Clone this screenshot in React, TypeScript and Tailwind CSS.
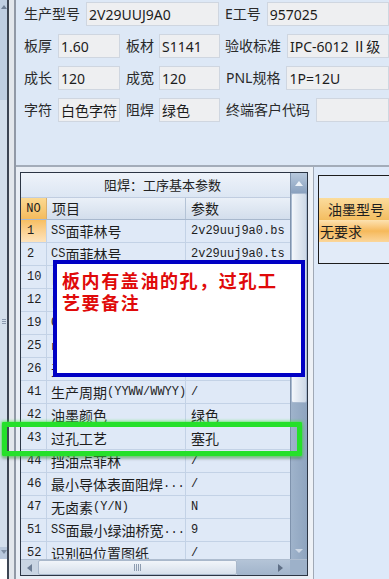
import React from "react";

const FORM_FONT = "font-['Noto_Sans','Noto_Sans_CJK_SC',sans-serif]";

function Mixed({ t }: { t: string }) {
  const parts = t.split(/([\x00-\x7f]+)/).filter((p) => p.length > 0);
  return (
    <>
      {parts.map((p, i) =>
        /^[\x00-\x7f]+$/.test(p) ? (
          <span key={i} className="font-['Liberation_Mono',monospace] text-[12px]">
            {p}
          </span>
        ) : (
          <span key={i}>{p}</span>
        )
      )}
    </>
  );
}

function Field({ w, value, grow }: { w?: string; value: string; grow?: boolean }) {
  return (
    <div
      className={`h-[24px] ${grow ? "flex-1" : w} bg-[#eeeff1] border border-[#cfd6e0] flex items-center pl-[2px] text-[14px] text-[#1c1c1c] whitespace-nowrap overflow-hidden`}
    >
      {value}
    </div>
  );
}

function Label({ t }: { t: string }) {
  return <div className="text-[14px] text-[#2a2a2a] whitespace-nowrap leading-[24px]">{t}</div>;
}

const rows: [string, string, string][] = [
  ["1", "SS面菲林号", "2v29uuj9a0.bs"],
  ["2", "CS面菲林号", "2v29uuj9a0.ts"],
  ["10", "自动曝光", "/"],
  ["12", "自动对位", "/"],
  ["19", "CCD对位", "/"],
  ["25", "中检要求", "/"],
  ["26", "无铅要求", "/"],
  ["41", "生产周期(YYWW/WWYY)", "/"],
  ["42", "油墨颜色", "绿色"],
  ["43", "过孔工艺", "塞孔"],
  ["44", "挡油点菲林", "/"],
  ["46", "最小导体表面阻焊...", "/"],
  ["47", "无卤素(Y/N)", "N"],
  ["51", "SS面最小绿油桥宽...", "9"],
  ["52", "识别码位置图纸", "/"],
];

export default function App() {
  return (
    <div className={`relative w-[389px] h-[579px] overflow-hidden flex bg-[#dde8f6] ${FORM_FONT}`}>
      {/* left strip */}
      <div className="flex h-full shrink-0">
        <div className="w-[7px] h-full flex flex-col">
          <div className="h-[100px] bg-[#bfcee2] flex justify-center pt-[5px]">
            <div className="w-0 h-0 border-l-[3px] border-r-[3px] border-b-[4px] border-l-transparent border-r-transparent border-b-[#6f7f96]" />
          </div>
          <div className="flex-1 bg-[#d4dfec] flex flex-col items-center">
            <div className="mt-[219px] flex flex-col gap-[1px]">
              <div className="w-[4px] h-[1px] bg-[#8c9bb0]" />
              <div className="w-[4px] h-[1px] bg-[#8c9bb0]" />
              <div className="w-[4px] h-[1px] bg-[#8c9bb0]" />
            </div>
          </div>
          <div className="h-[12px] bg-[#b9c8dc] flex justify-center pt-[3px]">
            <div className="w-0 h-0 border-l-[3px] border-r-[3px] border-t-[4px] border-l-transparent border-r-transparent border-t-[#7d8da2]" />
          </div>
          <div className="h-[20px] bg-white" />
        </div>
        <div className="w-[2px] h-full bg-[#3d4553]" />
        <div className="w-[5px] h-full bg-[#e3e7ec]" />
        <div className="w-[2px] h-full bg-[#9199a6]" />
      </div>

      {/* main */}
      <div className="flex-1 flex flex-col min-w-0">
        {/* form */}
        <div className="h-[165px] pl-[8px] pt-[2px] flex flex-col gap-[8px]">
          <div className="flex items-center h-[24px]">
            <Label t="生产型号" />
            <div className="w-[6px]" />
            <Field w="w-[133px]" value="2V29UUJ9A0" />
            <div className="w-[6px]" />
            <Label t="E工号" />
            <div className="w-[6px]" />
            <Field grow value="957025" />
          </div>
          <div className="flex items-center h-[24px]">
            <Label t="板厚" />
            <div className="w-[6px]" />
            <Field w="w-[62px]" value="1.60" />
            <div className="w-[6px]" />
            <Label t="板材" />
            <div className="w-[5px]" />
            <Field w="w-[61px]" value="S1141" />
            <div className="w-[5px]" />
            <Label t="验收标准" />
            <div className="w-[6px]" />
            <Field grow value="IPC-6012 Ⅱ级" />
          </div>
          <div className="flex items-center h-[24px]">
            <Label t="成长" />
            <div className="w-[6px]" />
            <Field w="w-[62px]" value="120" />
            <div className="w-[6px]" />
            <Label t="成宽" />
            <div className="w-[5px]" />
            <Field w="w-[61px]" value="120" />
            <div className="w-[6px]" />
            <Label t="PNL规格" />
            <div className="w-[6px]" />
            <Field grow value="1P=12U" />
          </div>
          <div className="flex items-center h-[24px]">
            <Label t="字符" />
            <div className="w-[6px]" />
            <Field w="w-[62px]" value="白色字符" />
            <div className="w-[6px]" />
            <Label t="阻焊" />
            <div className="w-[5px]" />
            <Field w="w-[61px]" value="绿色" />
            <div className="w-[6px]" />
            <Label t="终端客户代码" />
            <div className="w-[6px]" />
            <Field grow value="" />
          </div>
        </div>

        {/* separator */}
        <div className="h-[2px] bg-[#a3acb9]" />

        {/* bottom */}
        <div className="flex-1 flex min-h-0">
          {/* left table panel */}
          <div className="w-[294px] pl-[4px] pt-[5px] bg-[#e9eef5]">
            <div className="w-[288px] h-[404px] border border-[#2b3544] flex flex-col bg-[#dfe9f7]">
              <div className="flex-1 flex min-h-0">
                <div className="w-[269px] flex flex-col overflow-hidden font-['Noto_Sans_CJK_SC',sans-serif] text-[14px] text-[#1e1e1e]">
                  <div className="h-[25px] shrink-0 flex items-center justify-center pl-[14px] bg-linear-to-b from-[#eef3fa] to-[#dce6f3] border-b border-[#c0cde0] text-[13px] text-[#222]">
                    阻焊：工序基本参数
                  </div>
                  <div className="h-[22px] shrink-0 flex border-b border-[#a8b8cd]">
                    <div className="w-[26px] flex items-center justify-center bg-linear-to-b from-[#fbd992] to-[#f4bb5c] border-r border-[#d9b070]">
                      <span className="font-['Liberation_Mono',monospace] text-[12px]">NO</span>
                    </div>
                    <div className="w-[139px] flex items-center pl-[5px] bg-linear-to-b from-[#eaf0f8] to-[#d3deec] border-r border-[#b4c3d6]">
                      项目
                    </div>
                    <div className="flex-1 flex items-center pl-[5px] bg-linear-to-b from-[#eaf0f8] to-[#d3deec]">
                      参数
                    </div>
                  </div>
                  {rows.map(([no, item, val], i) => (
                    <div key={no} className="h-[23px] shrink-0 flex border-b border-[#c3d2e6]">
                      <div
                        className={`w-[26px] flex items-center pl-[6px] border-r border-[#c3d2e6] ${
                          i === 0 ? "bg-linear-to-b from-[#f7bf62] to-[#fde3bc]" : ""
                        }`}
                      >
                        <Mixed t={no} />
                      </div>
                      <div className="w-[139px] flex items-center pl-[4px] border-r border-[#c3d2e6] whitespace-nowrap overflow-hidden">
                        <Mixed t={item} />
                      </div>
                      <div className="flex-1 flex items-center pl-[5px] whitespace-nowrap overflow-hidden">
                        <Mixed t={val} />
                      </div>
                    </div>
                  ))}
                </div>
                {/* vertical scrollbar */}
                <div className="w-[17px] flex flex-col bg-linear-to-r from-[#9fb3cb] to-[#8ea4bf] border-l border-[#7f93ad]">
                  <div className="h-[20px] flex items-center justify-center bg-linear-to-b from-[#b8c9dd] to-[#8aa1bf]">
                    <div className="w-0 h-0 border-l-[4px] border-r-[4px] border-b-[5px] border-l-transparent border-r-transparent border-b-[#eef3f9]" />
                  </div>
                  <div className="h-[210px] bg-linear-to-r from-[#f2f6fb] to-[#cdd8e6] border border-[#a9bad0] rounded-[2px]" />
                  <div className="flex-1" />
                  <div className="h-[16px] flex items-center justify-center">
                    <div className="w-0 h-0 border-l-[4px] border-r-[4px] border-t-[4px] border-l-transparent border-r-transparent border-t-[#cfd9e6]" />
                  </div>
                </div>
              </div>
              {/* horizontal scrollbar */}
              <div className="h-[16px] flex bg-[#c9d5e3] border-t border-[#aebdd0]">
                <div className="w-[17px] flex items-center justify-center">
                  <div className="w-0 h-0 border-t-[4px] border-b-[4px] border-r-[5px] border-t-transparent border-b-transparent border-r-[#6c7d94]" />
                </div>
                <div className="w-[199px] bg-linear-to-b from-[#f1f5fa] to-[#d7e0eb] border border-[#a9b8cb] rounded-[2px] flex items-center justify-center gap-[1px]">
                  <div className="w-[1px] h-[7px] bg-[#8d9cb0]" />
                  <div className="w-[1px] h-[7px] bg-[#8d9cb0]" />
                  <div className="w-[1px] h-[7px] bg-[#8d9cb0]" />
                  <div className="w-[1px] h-[7px] bg-[#8d9cb0]" />
                </div>
                <div className="flex-1 bg-linear-to-b from-[#b4c4d7] to-[#a1b4cb] flex items-center justify-end pr-[7px]">
                  <div className="w-0 h-0 border-t-[4px] border-b-[4px] border-l-[5px] border-t-transparent border-b-transparent border-l-[#5f6f86]" />
                </div>
                <div className="w-[17px] bg-[#9db1c9]" />
              </div>
            </div>
          </div>
          {/* gap between panels */}
          <div className="w-[3px] bg-[#eef2f7]" />
          <div className="w-[1px] bg-[#a0a9b6]" />
          {/* right panel */}
          <div className="flex-1 pl-[4px] pt-[8px] bg-[#dde9f9]">
            <div className="h-[89px] border-l border-t border-b border-[#1d1d1d] flex flex-col font-['Noto_Sans_CJK_SC',sans-serif] text-[14px] text-[#1e1e1e] bg-[#e2ebf8]">
              <div className="h-[22px] shrink-0" />
              <div className="h-[22px] shrink-0 flex items-center pl-[9px] bg-linear-to-b from-[#fbdc9c] to-[#f3bd60] whitespace-nowrap">
                油墨型号
              </div>
              <div className="h-[22px] shrink-0 flex items-center pl-[1px] bg-linear-to-b from-[#fde2b0] via-[#f6b95a] to-[#fbd69a] whitespace-nowrap">
                无要求
              </div>
              <div className="flex-1" />
            </div>
          </div>
        </div>
      </div>

      {/* blue annotation box */}
      <div className="absolute left-[53px] top-[260px] w-[252px] h-[117px] border-[4px] border-[#0000c4] bg-white pl-[5px] pt-[5px]">
        <div className="font-['Noto_Sans_CJK_SC',sans-serif] font-bold text-[18px] leading-[22px] tracking-[1.6px] text-[#e00a0a] whitespace-nowrap">
          板内有盖油的孔，过孔工
          <br />
          艺要备注
        </div>
      </div>

      {/* green highlight box */}
      <div className="absolute left-[2px] top-[422px] w-[300px] h-[34px] border-[5px] border-[#25e02a] rounded-[1px] shadow-[0_0_3px_1px_rgba(70,230,70,0.7),0_3px_3px_rgba(0,0,0,0.25)]" />
    </div>
  );
}
